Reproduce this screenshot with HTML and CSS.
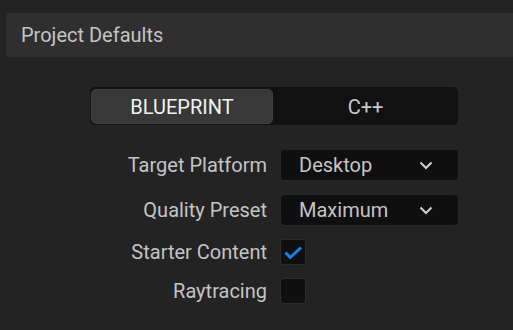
FILE: index.html
```html
<!DOCTYPE html>
<html>
<head>
<meta charset="UTF-8" />
<title>Project Defaults</title>
<link rel="stylesheet" href="styles.css">
</head>
<body>

<div class="sectionHead">Project Defaults</div>

<div class="content">

<div class="segmented">
<div class="segBtn segActive">BLUEPRINT</div>
<div class="segBtn">C++</div>
</div>

<div class="formGrid">
<div class="fLabel">Target Platform</div>
<div class="combo">
<span>Desktop</span>
<svg class="chev" width="14" height="9" viewBox="0 0 14 9"><path d="M1.5 1.5 L7 7 L12.5 1.5" fill="none" stroke="#cfcfcf" stroke-width="2"/></svg>
</div>

<div class="fLabel">Quality Preset</div>
<div class="combo">
<span>Maximum</span>
<svg class="chev" width="14" height="9" viewBox="0 0 14 9"><path d="M1.5 1.5 L7 7 L12.5 1.5" fill="none" stroke="#cfcfcf" stroke-width="2"/></svg>
</div>

<div class="fLabel">Starter Content</div>
<div class="ctrl">
<div class="check">
<svg width="26" height="26" viewBox="0 0 26 26"><path d="M5.5 13.5 L10.2 18.5 L21 8.5" fill="none" stroke="#1a7fe6" stroke-width="3"/></svg>
</div>
</div>

<div class="fLabel">Raytracing</div>
<div class="ctrl">
<div class="check"></div>
</div>
</div>

</div>

</body>
</html>
```

FILE: styles.css
```css
body{
margin: 0;
background: #232323;
font-family: Roboto, "Liberation Sans", sans-serif;
font-size: 20px;
color: #c4c4c4;
}

.sectionHead{
margin: 13px 0 0 6px;
height: 44px;
line-height: 44px;
padding-left: 15px;
background: #2f2f2f;
}

.content{
padding: 30px 0 0 90px;
width: 369px;
}

.segmented{
display: flex;
height: 38px;
width: 368px;
box-sizing: border-box;
padding: 2px 0 1px 1px;
background: #111111;
border-radius: 5px;
}

.segBtn{
flex: 1;
display: flex;
align-items: center;
justify-content: center;
color: #cacaca;
}

.segActive{
flex: 0 0 182px;
background: #383838;
border: 1px solid #414141;
box-sizing: border-box;
border-radius: 5px;
color: #f2f2f2;
}

.formGrid{
display: grid;
grid-template-columns: 177px 179px;
column-gap: 13px;
row-gap: 13px;
margin-top: 24px;
align-items: center;
}

.fLabel{
text-align: right;
}

.combo{
height: 32px;
box-sizing: border-box;
display: flex;
align-items: center;
justify-content: space-between;
padding: 0 25px 0 18px;
background: #0f0f0f;
border: 1px solid #262626;
border-radius: 4px;
}

.chev{
display: block;
}

.ctrl{
display: flex;
}

.check{
width: 26px;
height: 26px;
box-sizing: border-box;
background: #0f0f0f;
border: 1px solid #2c2c2c;
border-radius: 3px;
position: relative;
}

.check svg{
position: absolute;
left: -1px;
top: -1px;
}
```
